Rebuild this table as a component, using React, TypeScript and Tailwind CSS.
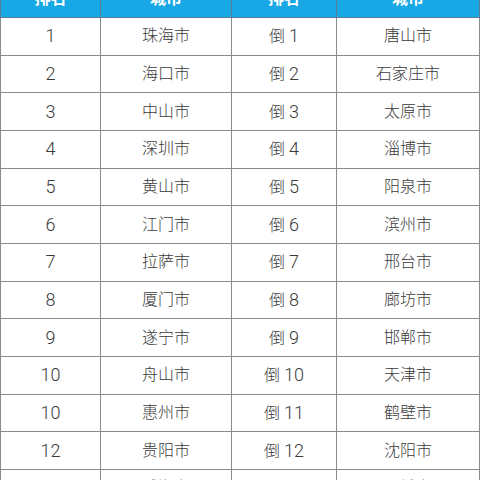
const rows: [string, string, string, string][] = [
  ['1', '珠海市', '倒 1', '唐山市'],
  ['2', '海口市', '倒 2', '石家庄市'],
  ['3', '中山市', '倒 3', '太原市'],
  ['4', '深圳市', '倒 4', '淄博市'],
  ['5', '黄山市', '倒 5', '阳泉市'],
  ['6', '江门市', '倒 6', '滨州市'],
  ['7', '拉萨市', '倒 7', '邢台市'],
  ['8', '厦门市', '倒 8', '廊坊市'],
  ['9', '遂宁市', '倒 9', '邯郸市'],
  ['10', '舟山市', '倒 10', '天津市'],
  ['10', '惠州市', '倒 11', '鹤壁市'],
  ['12', '贵阳市', '倒 12', '沈阳市'],
  ['13', '威海市', '倒 13', '晋城市'],
];

// digits run a touch bigger than the CJK glyphs in the source image
function Cell({ text }: { text: string }) {
  const parts = text.split(/(\d+)/).filter(Boolean);
  return (
    <>
      {parts.map((p, k) =>
        /\d/.test(p) ? (
          <span key={k} className="text-[18px]">
            {p}
          </span>
        ) : (
          <span key={k}>{p}</span>
        ),
      )}
    </>
  );
}

export default function App() {
  return (
    <div className="w-[480px] h-[480px] overflow-hidden bg-white font-['Roboto','Noto_Sans_CJK_SC',sans-serif]">
      <table className="-mt-[21px] w-[479px] border-collapse table-fixed">
        <colgroup>
          <col className="w-[100px]" />
          <col className="w-[131px]" />
          <col className="w-[105px]" />
          <col className="w-[143px]" />
        </colgroup>
        <thead>
          <tr className="h-[38px] bg-[#18a8e6] text-white text-[16px] font-bold">
            <th className="border border-[#5a7f96]">排名</th>
            <th className="border border-[#5a7f96]">城市</th>
            <th className="border border-[#5a7f96]">排名</th>
            <th className="border border-[#5a7f96]">城市</th>
          </tr>
        </thead>
        <tbody>
          {rows.map((r, i) => (
            <tr key={i} className="h-[37.67px] text-[16px] leading-none text-[#3a3a3a] font-light">
              {r.map((c, j) => (
                <td key={j} className="border border-[#8a8a8a] text-center p-0">
                  <Cell text={c} />
                </td>
              ))}
            </tr>
          ))}
        </tbody>
      </table>
    </div>
  );
}
